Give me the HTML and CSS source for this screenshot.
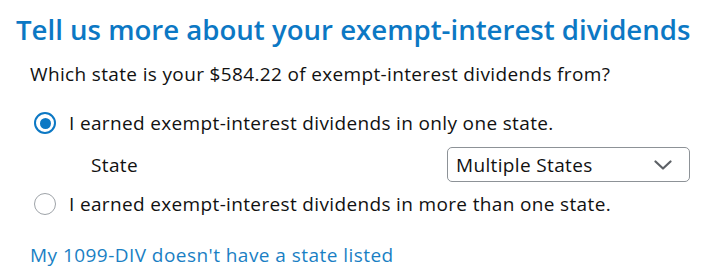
FILE: index.html
```html
<!DOCTYPE html>
<html lang="en">
<head>
  <meta charset="UTF-8">
  <title>Exempt-interest dividends</title>
  <link rel="stylesheet" href="styles.css">
</head>
<body>
  <h1 class="title">Tell us more about your exempt-interest dividends</h1>
  <div class="content">
    <p class="question">Which state is your $584.22 of exempt-interest dividends from?</p>

    <label class="radio-row">
      <span class="radio checked"></span>
      <span>I earned exempt-interest dividends in only one state.</span>
    </label>

    <div class="state-row">
      <span class="state-label">State</span>
      <div class="select">
        <span>Multiple States</span>
        <svg class="chevron" width="18" height="10" viewBox="0 0 18 10">
          <path d="M1.5 1.5 L9 8.5 L16.5 1.5" fill="none" stroke="#5d6166" stroke-width="2.2" stroke-linecap="round" stroke-linejoin="round"/>
        </svg>
      </div>
    </div>

    <label class="radio-row second">
      <span class="radio"></span>
      <span>I earned exempt-interest dividends in more than one state.</span>
    </label>

    <a class="link" href="#">My 1099-DIV doesn't have a state listed</a>
  </div>
</body>
</html>
```

FILE: styles.css
```css
body { margin: 0; padding: 0 0 0 16px; font-family: "Open Sans", "Noto Sans", sans-serif; color: #111; background: #fff; }
.title { margin: 0; padding-top: 12px; font-size: 27.6px; font-weight: 600; color: #0c78c4; line-height: 34px; }
.content { padding-left: 14px; font-size: 19px; letter-spacing: 0.35px; }
.question { margin: 16px 0 0; line-height: 24px; }
.radio-row { display: flex; align-items: center; gap: 13px; margin-top: 25px; line-height: 24px; padding-left: 4px; }
.radio-row.second { margin-top: 10px; }
.radio { width: 22px; height: 22px; border: 1.5px solid #9ea3a8; border-radius: 50%; box-sizing: border-box; flex: none; position: relative; }
.radio.checked { border: 2px solid #0c78c4; }
.radio.checked::after { content: ""; position: absolute; left: 3.5px; top: 3.5px; width: 11px; height: 11px; border-radius: 50%; background: #0c78c4; }
.state-row { display: flex; align-items: center; justify-content: space-between; margin-top: 12px; width: 660px; }
.state-label { padding-left: 61px; }
.select { width: 243px; height: 35px; box-sizing: border-box; border: 1px solid #8d9297; border-radius: 5px; display: flex; align-items: center; justify-content: space-between; padding: 0 17px 0 8px; }
.link { display: inline-block; margin-top: 27px; line-height: 24px; color: #1a7fc4; letter-spacing: 0.45px; text-decoration: none; }
```
